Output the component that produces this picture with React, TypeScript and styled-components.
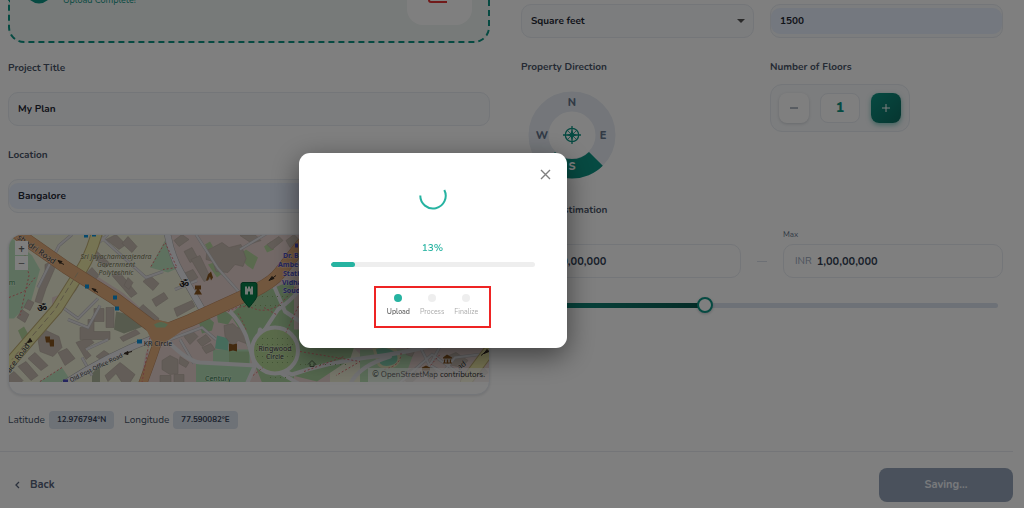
import React, { useState } from "react";
import styled, { createGlobalStyle, css } from "styled-components";

const teal = "#26b3a1";
const deepTeal = "#0d9484";

const GlobalStyle = createGlobalStyle`
  * { box-sizing: border-box; }
  body { margin: 0; background: #fff; }
  body, button, input, select { font-family: Nunito, Lato, "Open Sans", sans-serif; }
`;

const Page = styled.div`
  min-height: 100vh;
  display: flex;
  flex-direction: column;
  color: #1e293b;
  font-size: 10px;
  line-height: 20px;
`;

const Columns = styled.main`
  display: grid;
  grid-template-columns: minmax(0, 1fr) minmax(0, 1fr);
  gap: 31px;
  padding: 0 21px 22px 8px;
`;

const Column = styled.div`
  display: flex;
  flex-direction: column;
`;

const DropZone = styled.section`
  display: flex;
  justify-content: space-between;
  align-items: flex-start;
  padding: 0 16px 16px 20px;
  border: 2px dashed ${deepTeal};
  border-top: 0;
  border-radius: 0 0 16px 16px;
  background: #eff5f2;
`;

const UploadStatus = styled.div`
  display: flex;
  align-items: flex-start;
  gap: 15px;
  color: ${deepTeal};
  font-size: 9px;
  line-height: 12px;
  height: 6px;
  p { margin: -6px 0 0; }
`;

const FilePreview = styled.div`
  width: 65px;
  height: 25px;
  padding-left: 21px;
  border-radius: 0 0 16px 16px;
  background: #fff;
  svg { display: block; }
`;

const Label = styled.label`
  display: block;
  margin: 14px 0;
  font-size: 10px;
  font-weight: 700;
  line-height: 20px;
  color: #4a5568;
`;

const TitleLabel = styled(Label)`
  margin-top: 15px;
`;

const LowerLabel = styled(Label)`
  margin: 19px 0 14px;
`;

const Field = styled.div<{ $filled?: boolean; $plain?: boolean }>`
  position: relative;
  display: flex;
  align-items: center;
  padding: 3px 0;
  border: 1px solid #e8ecf2;
  border-radius: 10px;
  background: ${(p) => (p.$plain ? "#fff" : "#f8fafc")};
  input, select {
    flex: 1;
    min-width: 0;
    width: 100%;
    margin: 0;
    padding: 3px 9px;
    border: 0;
    border-radius: 9px;
    outline: 0;
    appearance: none;
    background: ${(p) => (p.$filled ? "#e8f0fe" : "transparent")};
    font-size: 10px;
    font-weight: 700;
    line-height: 20px;
    height: 26px;
    color: #1f2733;
  }
`;

const Caret = styled.svg`
  position: absolute;
  right: 8px;
  top: 14px;
  pointer-events: none;
`;

const MapCard = styled.section`
  position: relative;
  margin-top: 21px;
  padding-bottom: 12px;
  border: 1px solid #e8ecf2;
  border-radius: 14px;
  overflow: hidden;
  background: #fff;
  box-shadow: 0 1px 3px rgba(15, 23, 42, 0.12);
  > svg { display: block; width: 100%; height: 147px; }
`;

const ZoomControls = styled.div`
  position: absolute;
  left: 6px;
  top: 6px;
  display: grid;
  gap: 1px;
  button {
    width: 13px;
    height: 14px;
    padding: 0;
    border: 0;
    background: #fff;
    color: #666;
    font-size: 11px;
    font-weight: 700;
    line-height: 13px;
  }
`;

const Attribution = styled.p`
  position: absolute;
  right: 0;
  bottom: 12px;
  margin: 0;
  padding: 0 4px;
  background: rgba(255, 255, 255, 0.65);
  color: #333;
  font-size: 8px;
  line-height: 14px;
  a { color: #666; text-decoration: none; }
`;

const Coordinates = styled.div`
  display: flex;
  align-items: center;
  margin-top: 16px;
  font-size: 10px;
  line-height: 18px;
  color: #475569;
  output {
    margin: 0 10px 0 4px;
    padding: 0 8px;
    border-radius: 4px;
    background: #dde4ef;
    font-size: 8px;
    font-weight: 700;
    color: #3a465c;
  }
`;

const Pair = styled.div`
  display: grid;
  grid-template-columns: minmax(0, 1fr) minmax(0, 1fr);
  gap: 16px;
`;

const AreaRow = styled(Pair)`
  margin: 4px 0 5px;
`;

const Dial = styled.svg`
  display: block;
  margin-left: 7px;
`;

const Stepper = styled.div`
  display: inline-flex;
  align-items: center;
  gap: 11px;
  margin-top: -7px;
  padding: 8px;
  border: 1px solid #e8ecf2;
  border-radius: 12px;
  background: #f8fafc;
  output {
    width: 40px;
    border: 1px solid #e8ecf2;
    border-radius: 8px;
    background: #fff;
    color: ${deepTeal};
    font-size: 14px;
    font-weight: 800;
    line-height: 28px;
    text-align: center;
  }
`;

const StepButton = styled.button<{ $primary?: boolean }>`
  width: 30px;
  height: 30px;
  display: grid;
  place-items: center;
  padding: 0;
  border: 0;
  border-radius: 8px;
  color: #64748b;
  background: #fff;
  box-shadow: 0 1px 3px rgba(15, 23, 42, 0.16);
  ${(p) =>
    p.$primary &&
    css`
      color: #fff;
      background: linear-gradient(135deg, #0d9484, #0d6b60);
      box-shadow: 0 2px 5px rgba(13, 148, 132, 0.5);
    `}
`;

const BudgetLabel = styled.h2`
  margin: 21px 0 5px;
  font-size: 10px;
  font-weight: 700;
  line-height: 20px;
  color: #4a5568;
`;

const BudgetRow = styled.div`
  display: flex;
  align-items: flex-end;
`;

const BudgetField = styled.div`
  flex: 1;
  min-width: 0;
  > label { display: block; font-size: 8px; line-height: 19px; color: #64748b; }
  ${Field} input { padding-left: 5px; font-size: 11px; font-weight: 700; color: #334155; }
`;

const Currency = styled.span`
  padding-left: 11px;
  font-size: 10px;
  color: #94a3b8;
`;

const Dash = styled.span`
  width: 10px;
  height: 1px;
  margin: 0 16px 16px;
  background: #dbe1ea;
`;

const Range = styled.input`
  appearance: none;
  display: block;
  margin: 19px 5px 0;
  height: 16px;
  background: transparent;
  &::-webkit-slider-runnable-track {
    height: 5px;
    border-radius: 3px;
    background: linear-gradient(90deg, ${deepTeal}, #0b564d) 0 0 / 38% 100% no-repeat, #dbe3ee;
  }
  &::-webkit-slider-thumb {
    appearance: none;
    width: 16px;
    height: 16px;
    margin-top: -6px;
    border: 2px solid ${deepTeal};
    border-radius: 50%;
    background: #fff;
    box-shadow: 0 1px 3px rgba(15, 23, 42, 0.25);
  }
`;

const Footer = styled.footer`
  display: flex;
  justify-content: space-between;
  align-items: center;
  margin-right: 11px;
  padding: 16px 0 5px 12px;
  border-top: 1px solid #e8ebf0;
`;

const BackButton = styled.button`
  display: flex;
  align-items: center;
  gap: 8px;
  padding: 0;
  border: 0;
  background: none;
  color: #56627a;
  font-size: 11px;
  font-weight: 700;
  line-height: 20px;
`;

const SaveButton = styled.button`
  padding: 7px 40px;
  min-width: 134px;
  border: 0;
  border-radius: 8px;
  background: #94a3b8;
  color: #f1f4f8;
  font-size: 11px;
  font-weight: 700;
  line-height: 20px;
`;

const Backdrop = styled.div`
  position: fixed;
  inset: 0;
  display: flex;
  justify-content: center;
  align-items: center;
  padding: 0 159px 7px 0;
  background: rgba(0, 0, 0, 0.5);
`;

const Dialog = styled.div`
  position: relative;
  width: 268px;
  display: flex;
  flex-direction: column;
  align-items: center;
  padding: 29px 32px 20px;
  border-radius: 11px;
  background: #fff;
  box-shadow: 0 8px 28px rgba(0, 0, 0, 0.5);
`;

const CloseButton = styled.button`
  position: absolute;
  top: 16px;
  right: 16px;
  padding: 0;
  border: 0;
  background: none;
  line-height: 0;
`;

const Percent = styled.p`
  margin: 28px 0 4px;
  color: ${teal};
  font-size: 10px;
  font-weight: 600;
  line-height: 20px;
`;

const Track = styled.div`
  width: 100%;
  height: 5px;
  border-radius: 3px;
  overflow: hidden;
  background: #eee;
`;

const Fill = styled.div`
  height: 100%;
  border-radius: 3px;
  background: ${teal};
`;

const Steps = styled.ol`
  display: flex;
  gap: 10px;
  margin: 19px 0 0;
  padding: 6px 11px 8px;
  border: 2px solid #ee2424;
  list-style: none;
`;

const Step = styled.li<{ $active?: boolean }>`
  display: flex;
  flex-direction: column;
  align-items: center;
  gap: 4px;
  color: ${(p) => (p.$active ? "#666" : "#aaa")};
  font-size: 7px;
  font-weight: ${(p) => (p.$active ? 600 : 400)};
  line-height: 12px;
  &::before {
    content: "";
    width: 8px;
    height: 8px;
    border-radius: 50%;
    background: ${(p) => (p.$active ? teal : "#eee")};
  }
`;

const buildings = [
  "M84 276l8-8 7 8-7 8z", "M72 282l6-8 5 4-8 14-9 8-5-5z", "M45 265l8-4 3 5-10 23-5 15-6-2 5-16 5-12z",
  "M17 318l5-8 7 5-4 8zM28 300l6 3-4 8-6-3z", "M38 340l8-9 13 6 3 11-9 9-13-5z", "M58 353l9-4 8 10-10 7z",
  "M28 359l7-6 13 13-7 5z", "M18 367l8-5 12 14-7 5z", "M9 376l5-4 9 9-2 2H9z", "M76 343l13-5 5 5-9 6 6 7-5 4z",
  "M94 309h10v13H94zM106 308h8v20h-8z", "M80 328h8v-8h6v12h16v8H80z", "M96 357l8-6 6 4-8 6z",
  "M105 376l15-13 4 3 11 9-5 8h-8l-6-9-8 8z", "M96 251l14 13-5 4-14-13z", "M106 240l10-5 10 10-7 5z",
  "M128 237l9 10-5 6-10-9z", "M112 276l7-4 18 22-6 4z", "M124 286l4-8 5 5-4 7z", "M120 338l16-8 4 4-17 8z",
  "M138 310l5-5 16 14-3 7z", "M143 282l7-6 9 8-6 7z", "M152 300l12-7 4 6-12 8z", "M174 241l8-6 7 5-10 7z",
  "M184 252l8-4 6 11-8 4z", "M181 275l12-5 5 8-14 8z", "M174 309l18-8 3 6-18 10z", "M191 260l9-4 11 23-7 3z",
  "M207 251l15-8 7 5 12-3 5 14-3 8-8-2-7 8-12-1-3-10-7-2z", "M224 326l9-2 4 4 8 2 1 14-8-3-5 6-8-10z",
  "M184 337l8-6 6 6-8 8z", "M197 341l9-6 5 6-9 6z", "M202 348l9-4 4 6-9 4z", "M162 361l8-5 8 4v14l-8 1-8-5z",
  "M180 357l9 6-3 5-7-4z", "M160 376h11v7h-11z", "M174 375h10v8h-10z", "M267 245l12-8 4 4-11 9z",
  "M286 241l8-6 5 5-9 8z", "M240 236h16l5 5-9 3z", "M403 374l9-5 8 6-7 7h-7z", "M422 370l9-4 6 8-8 5z",
  "M444 358l12-5 12 8-6 7-14-3z", "M471 369l9-5 8 9-6 5z", "M407 349l8 2-3 6-6-2z",
];

const MapArt = () => (
  <svg viewBox="9 235 480 148" preserveAspectRatio="xMidYMid slice" role="img" aria-label="Map of Bangalore">
    <path fill="#eeeed6" d="M0 230h500v160H0z" />
    <path fill="#e7d3cf" d="M82 275l35 20 42 38-5 15-14 40h190V230H166l12 40 22 42-36 17-40-35-25-16zM350 345h140v38H390z" />
    <path fill="#e7d3cf" d="M52 298l16-6-16 22zM140 382l6-30 24-5 22 18-2 18z" />
    <path fill="#bde3bf" d="M8 235l24 21 8 14-9 32-17 17H8z" />
    <path fill="#bde3bf" d="M38 383l24-15 10 15zM150 268l15-27 14 27-11 5z" />
    <path fill="#aeb69c" d="M116 312l22 5 8 9-22 8-10-4zM92 374l8-8v17h-8z" />
    <path fill="#a8cf9c" d="M230 315l20-17 32-13 12-5v103h-32l-7-17-14-34zM290 330h70l-10 30-33 22-37-9z" />
    <path fill="#b4dfb7" d="M196 364l58 2-5 17h-53zM213 350h37v16h-37z" />
    <path fill="#a8cf9c" d="M153 325l7-4 10 2-2 5-10 1zM199 323l7-7 8 7-2 8-10 3zM217 316l7-5 9 6-5 8-10-2zM229 352h20v13h-20z" />
    <path fill="#b4d49c" d="M205 245l5-3 3 5-5 4zM238 256l8-6 12 8-5 12-6-4zM264 247l7-5 3 8-7 3zM208 265l6-2 8 11-5 4zM18 331l6-4 5 9-7 4z" />
    <path fill="#8cd8b8" d="M217 336l12 3-1 12-13-2z" />
    <path fill="#b7dcb2" d="M360 350h55l-12 33h-43z" />
    <path fill="#86d3b3" stroke="#e3e3bb" strokeWidth="3" d="M374 349c10-5 25 0 25 10 0 8-14 12-20 6z" />
    <g fill="#c6bab0" stroke="#b3a89e" strokeWidth=".6">
      {buildings.map((d) => <path key={d} d={d} />)}
    </g>
    <g fill="none" stroke="#bcb9bb" strokeWidth="3">
      <path d="M38 288l21-42 13-11M68 320l20 8 12-22M98 244l10-9M60 306l18 13 20-20M98 235l48 43 17-6M196 235l22 34 25 28M240 250l40-24M175 290l22-9M162 343l40-15 14 12M180 340l14 24M420 347l9 18 14 8 12-15 32-4M400 383l32-28 40 28M440 347l-12 22M82 358l10 18M86 350l22-10" />
    </g>
    <g fill="none" stroke="#e2e1e3" strokeWidth="2">
      <path d="M38 288l21-42 13-11M68 320l20 8 12-22M98 244l10-9M60 306l18 13 20-20M98 235l48 43 17-6M196 235l22 34 25 28M240 250l40-24M175 290l22-9M162 343l40-15 14 12M180 340l14 24M420 347l9 18 14 8 12-15 32-4M400 383l32-28 40 28M440 347l-12 22M82 358l10 18M86 350l22-10" />
    </g>
    <g fill="none" strokeLinecap="round" strokeLinejoin="round">
      <path stroke="#aaa" strokeWidth="7" d="M60 387q45-30 95-49M167 232q4 24 14 41l20 35" />
      <path stroke="#ebebee" strokeWidth="6" d="M60 387q45-30 95-49M167 232q4 24 14 41l20 35" />
      <path stroke="#e6e6e8" strokeWidth="4" d="M168 342q20 20 32 21l57 3q20 1 35 9 35-12 75-17t60-11M260 330q-4 20-5 36l-8 18M230 312q10 10 16 24l9 30M300 290q-10 12-22 20l-17 26M273 284l12 28 15 10M280 373l20 12M350 385q8-18 40-28" />
      <circle cx="275" cy="351" r="23" stroke="#e6e6e8" strokeWidth="4" fill="#b5d795" />
      <path stroke="#bfae75" strokeWidth="12" d="M97 233q-6 22-16 38L57 309 3 371M496 342l-30 40" />
      <path stroke="#ede8a6" strokeWidth="10" d="M97 233q-6 22-16 38L57 309 3 371M496 342l-30 40" />
      <path stroke="#bd8a62" strokeWidth="13" d="M9 228l57 40 49 31 45 34 30-12 55-25q27-12 35-23l22-28" />
      <path stroke="#e5ae7c" strokeWidth="12" d="M9 228l57 40 49 31 45 34 30-12 55-25q27-12 35-23l22-28" />
      <path stroke="#bd8a62" strokeWidth="9" d="M160 334q-5 18-18 52" />
      <path stroke="#e5ae7c" strokeWidth="8" d="M160 334q-5 18-18 52" />
      <path fill="#e5ae7c" stroke="none" d="M144 325l13-5 20 5 4 7-17 12-10 2z" />
    </g>
    <path fill="#a8cf9c" d="M154 325q7-5 14 0l-3 3h-9z" />
    <g fill="none" stroke="#e0777a" strokeWidth="1" strokeDasharray="2 2">
      <path d="M9 298l15-6 11-14M25 256l4 20-9 40M151 267l14-24 12 25-14 2M228 312q14-8 26-3t26-4l16-18M238 314q4 6 8 16M300 303l-14 30M264 308l14 8M40 382l22-14M300 352l60 10-24 14M304 372l40-15M384 370q18-4 17-18M253 376l10-8M420 378l20-23M150 338l-8 45" />
    </g>
    <path fill="none" stroke="#b6a98c" strokeDasharray="6 3" d="M78 273L55 310 12 360" />
    <g fill="none" stroke="#87a86d" strokeDasharray="1 4">
      <path d="M262 339h26M257 345h36M256 351h38M257 357h36M262 363h26M240 306h44M262 297h26M300 365h50M270 378h18" />
    </g>
    <g fill="#0d92da">
      <path d="M84 235h4v3h-4zM92 234h4v3h-4zM85 285h4v4h-4zM113 296h4v4h-4zM115 307h4v4h-4zM137 340h5v4h-5z" />
      <path fill="#4b4bc0" d="M63 380h5v3h-5zM295 244h3v4h-3z" />
    </g>
    <g fill="#392e23" stroke="#392e23" strokeWidth="1">
      <path d="M92 289l4 1-1 2zM94 290l4 3M58 261l4 1-2 2zM60 263l4 2M124 354l4-2v3zM128 353l4-1M28 343l2-4 2 3zM28 342l-3 4M269 281l3-4 2 2zM272 279l4-3M484 354l3-4 2 2zM486 352l-5 4" />
    </g>
    <g fill="#87551e">
      <path d="M45 337h5v6h-4zM49 340h5v7h-4zM206 281l2-6 3-3 2 6-2 3-1-4-2 4zM195 286h6v4h-2l3 5h-8l3-5h-2zM229 344l4 1 4-1v8l-4-1-4 1z" />
      <path d="M443 358l4-3 5 3v1h-9zM444 360h1v3h-1zM447 360h1v3h-1zM450 360h1v3h-1zM443 363h9v1h-9zM422 368l4-2 4 2v3h-8z" />
      <path fill="none" stroke="#51644d" d="M308 365l4-4 4 4M310 364v3h4v-3" />
    </g>
    <g fontFamily='"Noto Sans", sans-serif' fontSize="7" fill="#3b3b3b" textAnchor="middle" stroke="#fff" strokeOpacity=".4" strokeWidth="1" paintOrder="stroke">
      <text x="42" y="311" fontSize="10" fontWeight="700" fill="#222">ॐ</text>
      <text x="184" y="287" fontSize="10" fontWeight="700" fill="#222">ॐ</text>
      <g fontStyle="italic" fill="#75764f">
        <text x="116" y="259">Sri Jayachamarajendra</text>
        <text x="116" y="267">Government</text>
        <text x="116" y="275">Polytechnic</text>
      </g>
      <text transform="translate(35 252) rotate(35)" fontSize="8">shadri Road</text>
      <text transform="translate(20 360) rotate(-54)" fontSize="8">ace Road</text>
      <text transform="translate(97 370) rotate(-26)" fontSize="6">Old Post Office Road</text>
      <text x="158" y="346">KR Circle</text>
      <text x="275" y="351">Ringwood</text>
      <text x="275" y="359">Circle</text>
      <text x="218" y="381" fill="#2f7848">Century</text>
      <text x="12" y="285" fill="#438b55">m</text>
      <text transform="translate(463 368) rotate(-36)" fontSize="8">ad</text>
      <g fill="#4b4bc0" fontWeight="700" textAnchor="start">
        <text x="283" y="258">Dr. B R</text>
        <text x="278" y="267">Ambedkar</text>
        <text x="283" y="276">Station</text>
        <text x="282" y="285">Vidhana</text>
        <text x="283" y="293">Soudha</text>
      </g>
    </g>
    <path fill="#06804b" stroke="#045f38" d="M243 283h12q2 0 2 2v11q0 3-8 12-8-9-8-12v-11q0-2 2-2z" />
    <path fill="#e9f4ed" d="M245 295v-8h2v2h1v-2h2v2h1v-2h2v8h-3v-3h-2v3z" />
  </svg>
);

const CompassDial = () => (
  <Dial width="88" height="88" viewBox="-44 -44 88 88" role="img" aria-label="South selected">
    <circle r="33.5" fill="none" stroke="#e8edf4" strokeWidth="20" />
    <path fill={deepTeal} d="M17 17L30.8 30.8A43.5 43.5 0 0 1-30.8 30.8L-17 17A24 24 0 0 0 17 17z" />
    <g fill="none" stroke={deepTeal} strokeWidth="1.3">
      <circle r="6.7" />
      <path d="M-9 0H9M0-9V9" />
      <path strokeWidth=".8" d="M-4.7-4.7l9.4 9.4M-4.7 4.7l9.4-9.4" />
    </g>
    <path fill={deepTeal} d="M0-5L1.6-1.6 5 0 1.6 1.6 0 5-1.6 1.6-5 0-1.6-1.6z" />
    <g fill="#64748b" fontSize="11" fontWeight="800" textAnchor="middle">
      <text y="-29">N</text>
      <text x="31" y="4">E</text>
      <text x="-30" y="4">W</text>
      <text y="35" fill="#fff">S</text>
    </g>
  </Dial>
);

export default function App() {
  const [floors, setFloors] = useState(1);
  const progress = 13;
  return (
    <>
      <GlobalStyle />
      <Page>
        <Columns>
          <Column>
            <DropZone>
              <UploadStatus>
                <svg width="18" height="4" viewBox="0 0 18 4" aria-hidden="true"><path fill={deepTeal} d="M0 0h18q-9 7-18 0z" /></svg>
                <p>Upload Complete!</p>
              </UploadStatus>
              <FilePreview>
                <svg width="19" height="4" viewBox="0 0 19 4" fill="none" stroke="#e23434" strokeWidth="2" aria-hidden="true">
                  <path d="M1 0q0 2 2 2h16" />
                </svg>
              </FilePreview>
            </DropZone>
            <TitleLabel htmlFor="title">Project Title</TitleLabel>
            <Field><input id="title" defaultValue="My Plan" /></Field>
            <LowerLabel htmlFor="location">Location</LowerLabel>
            <Field $filled><input id="location" defaultValue="Bangalore" /></Field>
            <MapCard>
              <MapArt />
              <ZoomControls>
                <button aria-label="Zoom in">+</button>
                <button aria-label="Zoom out">−</button>
              </ZoomControls>
              <Attribution>© <a href="#osm">OpenStreetMap</a> contributors.</Attribution>
            </MapCard>
            <Coordinates>
              <span>Latitude</span><output>12.976794°N</output>
              <span>Longitude</span><output>77.590082°E</output>
            </Coordinates>
          </Column>
          <Column>
            <AreaRow>
              <Field>
                <select aria-label="Area unit"><option>Square feet</option></select>
                <Caret width="8" height="5" viewBox="0 0 8 5" aria-hidden="true"><path fill="#555" d="M0 0h8L4 4z" /></Caret>
              </Field>
              <Field $filled><input aria-label="Area" defaultValue="1500" /></Field>
            </AreaRow>
            <Pair>
              <div>
                <Label as="div">Property Direction</Label>
                <CompassDial />
              </div>
              <div>
                <Label as="div">Number of Floors</Label>
                <Stepper>
                  <StepButton aria-label="Fewer floors" onClick={() => setFloors(Math.max(1, floors - 1))}>
                    <svg width="10" height="10" stroke="currentColor"><path d="M1 5h8" /></svg>
                  </StepButton>
                  <output>{floors}</output>
                  <StepButton $primary aria-label="More floors" onClick={() => setFloors(floors + 1)}>
                    <svg width="10" height="10" stroke="currentColor"><path d="M1 5h8M5 1v8" /></svg>
                  </StepButton>
                </Stepper>
              </div>
            </Pair>
            <BudgetLabel>Budget Estimation</BudgetLabel>
            <BudgetRow>
              <BudgetField>
                <label htmlFor="min">Min</label>
                <Field $plain><Currency>INR</Currency><input id="min" defaultValue="50,00,000" /></Field>
              </BudgetField>
              <Dash />
              <BudgetField>
                <label htmlFor="max">Max</label>
                <Field $plain><Currency>INR</Currency><input id="max" defaultValue="1,00,00,000" /></Field>
              </BudgetField>
            </BudgetRow>
            <Range type="range" aria-label="Budget" min={0} max={1000} defaultValue={374} />
          </Column>
        </Columns>
        <Footer>
          <BackButton>
            <svg width="10" height="10" viewBox="0 0 10 10" fill="none" stroke="currentColor" strokeWidth="1.3" aria-hidden="true"><path d="M7 2L4 5l3 3" /></svg>
            Back
          </BackButton>
          <SaveButton>Saving...</SaveButton>
        </Footer>
      </Page>
      <Backdrop>
        <Dialog role="dialog" aria-modal="true" aria-label="Upload progress">
          <CloseButton aria-label="Close">
            <svg width="11" height="11" viewBox="0 0 11 11" fill="none" stroke="#808080" strokeWidth="1.4"><path d="M1 1l9 9M10 1l-9 9" /></svg>
          </CloseButton>
          <svg width="28" height="28" viewBox="-14 -14 28 28" fill="none" stroke={teal} strokeWidth="2" aria-hidden="true">
            <path d="M-12.7-.5A12.7 12.7 0 1 0 11.3-6" />
          </svg>
          <Percent>{progress}%</Percent>
          <Track role="progressbar" aria-valuenow={progress}><Fill style={{ width: `${progress - 1}%` }} /></Track>
          <Steps>
            <Step $active>Upload</Step>
            <Step>Process</Step>
            <Step>Finalize</Step>
          </Steps>
        </Dialog>
      </Backdrop>
    </>
  );
}
